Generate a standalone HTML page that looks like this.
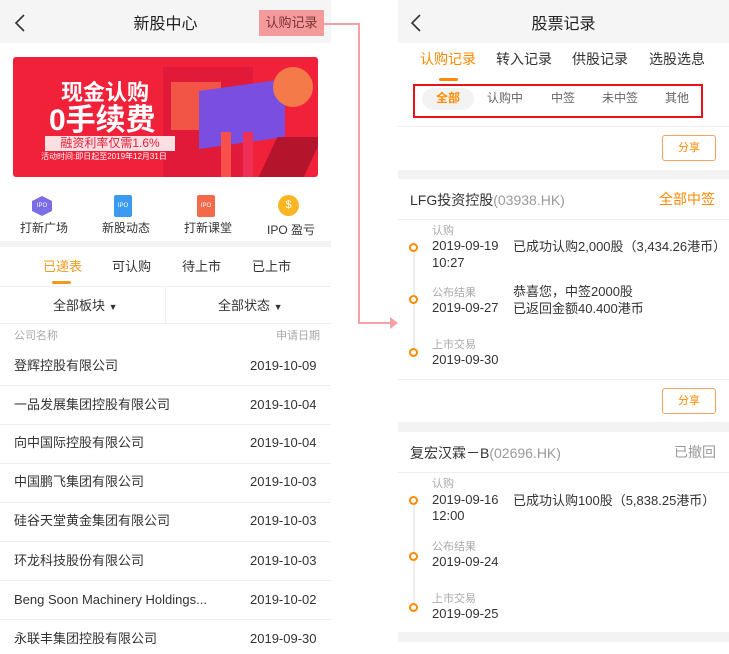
<!DOCTYPE html>
<html><head><meta charset="utf-8"><style>
*{margin:0;padding:0;box-sizing:border-box}
body{width:729px;height:654px;background:#fff;position:relative;overflow:hidden;font-family:"Liberation Sans","Noto Sans CJK SC",sans-serif;color:#333}
.a{position:absolute;white-space:nowrap}
.hdr{background:#f5f5f5}
.row{font-size:13px;color:#333}
.line{position:absolute;height:1px;background:#efefef}
.dot{position:absolute;width:9px;height:9px;border:2.5px solid #ff8a00;border-radius:50%;background:#fff}
.sm{font-size:11px;color:#aaa}
.t{font-size:13px;color:#333}
.share{position:absolute;width:54px;height:26px;border:1px solid #f7a35c;border-radius:3px;color:#ff8a00;font-size:11px;text-align:center;line-height:24px}
</style></head><body>
<!-- LEFT -->
<div class="a hdr" style="left:0;top:0;width:331px;height:43px"></div>
<svg class="a" style="left:14px;top:14px" width="12" height="18"><path d="M10 1 L2 9 L10 17" stroke="#333" stroke-width="1.6" fill="none"/></svg>
<div class="a" style="left:0;width:331px;top:10px;text-align:center;font-size:16px;color:#222">新股中心</div>
<div class="a" style="left:259px;top:10px;width:65px;height:26px;background:#f49a9c;color:#7a3333;font-size:13px;text-align:center;line-height:26px">认购记录</div>
<div class="a" style="left:13px;top:57px;width:305px;height:120px;background:#f2213a;border-radius:3px;overflow:hidden">
 <div class="a" style="left:150px;top:10px;width:90px;height:110px;background:#e21a3a"></div>
 <div class="a" style="left:158px;top:25px;width:50px;height:48px;background:#f6634a;opacity:.8"></div>
 <div class="a" style="left:186px;top:28px;width:86px;height:58px;background:#7a4ee0;transform:skewY(-8deg)"></div>
 <div class="a" style="left:260px;top:10px;width:40px;height:40px;border-radius:50%;background:#f47a4a"></div>
 <div class="a" style="left:208px;top:75px;width:10px;height:45px;background:#f8504a"></div>
 <div class="a" style="left:230px;top:75px;width:10px;height:45px;background:#ee3056"></div>
 <div class="a" style="left:255px;top:80px;width:45px;height:40px;background:#b5152c;transform:skewX(-25deg)"></div>
 <div class="a" style="left:48px;top:18px;font-size:22px;font-weight:bold;color:#fff">现金认购</div>
 <div class="a" style="left:36px;top:38px;font-size:30px;font-weight:bold;color:#fff">0手续费</div>
 <div class="a" style="left:32px;top:79px;width:130px;height:15px;background:#fcdfe2;color:#e0203a;font-size:12px;text-align:center;line-height:15px">融资利率仅需1.6%</div>
 <div class="a" style="left:28px;top:94px;font-size:8px;color:#fff">活动时间:即日起至2019年12月31日</div>
</div>
<div class="a" style="left:32px;top:196px;width:20px;height:20px;background:#7b6de8;clip-path:polygon(50% 0,100% 25%,100% 75%,50% 100%,0 75%,0 25%);color:#fff;font-size:6px;text-align:center;line-height:20px">IPO</div>
<div class="a" style="left:114px;top:195px;width:18px;height:22px;background:#3c9af0;border-radius:2px;color:#fff;font-size:6px;text-align:center;line-height:22px">IPO</div>
<div class="a" style="left:197px;top:195px;width:18px;height:22px;background:#f36a4a;border-radius:2px;color:#fff;font-size:6px;text-align:center;line-height:22px">IPO</div>
<div class="a" style="left:278px;top:195px;width:21px;height:21px;background:#f8b622;border-radius:50%;color:#fff;font-size:11px;text-align:center;line-height:21px">$</div>
<div class="a row" style="left:20px;top:219px;font-size:12px">打新广场</div>
<div class="a row" style="left:102px;top:219px;font-size:12px">新股动态</div>
<div class="a row" style="left:184px;top:219px;font-size:12px">打新课堂</div>
<div class="a row" style="left:267px;top:221px;font-size:12px">IPO 盈亏</div>
<div class="a" style="left:0;top:241px;width:331px;height:6px;background:#f3f3f3"></div>
<div class="a" style="left:43px;top:256px;font-size:13px;color:#f39a1e">已递表</div>
<div class="a" style="left:52px;top:281px;width:19px;height:3px;background:#f39a1e;border-radius:2px"></div>
<div class="a row" style="left:112px;top:256px">可认购</div>
<div class="a row" style="left:182px;top:256px">待上市</div>
<div class="a row" style="left:252px;top:256px">已上市</div>
<div class="line" style="left:0;top:286px;width:331px"></div>
<div class="a" style="left:165px;top:287px;width:1px;height:36px;background:#efefef"></div>
<div class="a row" style="left:53px;top:295px">全部板块 <span style="font-size:9px">▼</span></div>
<div class="a row" style="left:218px;top:295px">全部状态 <span style="font-size:9px">▼</span></div>
<div class="line" style="left:0;top:323px;width:331px"></div>
<div class="a sm" style="left:14px;top:327px">公司名称</div>
<div class="a sm" style="left:276px;top:327px">申请日期</div>
<div class="a row" style="left:14px;top:355px">登辉控股有限公司</div><div class="a row" style="left:250px;top:358px">2019-10-09</div>
<div class="line" style="left:0;top:385px;width:331px"></div>
<div class="a row" style="left:14px;top:394px">一品发展集团控股有限公司</div><div class="a row" style="left:250px;top:397px">2019-10-04</div>
<div class="line" style="left:0;top:424px;width:331px"></div>
<div class="a row" style="left:14px;top:432px">向中国际控股有限公司</div><div class="a row" style="left:250px;top:435px">2019-10-04</div>
<div class="line" style="left:0;top:463px;width:331px"></div>
<div class="a row" style="left:14px;top:471px">中国鹏飞集团有限公司</div><div class="a row" style="left:250px;top:474px">2019-10-03</div>
<div class="line" style="left:0;top:502px;width:331px"></div>
<div class="a row" style="left:14px;top:510px">硅谷天堂黄金集团有限公司</div><div class="a row" style="left:250px;top:513px">2019-10-03</div>
<div class="line" style="left:0;top:541px;width:331px"></div>
<div class="a row" style="left:14px;top:550px">环龙科技股份有限公司</div><div class="a row" style="left:250px;top:553px">2019-10-03</div>
<div class="line" style="left:0;top:580px;width:331px"></div>
<div class="a row" style="left:14px;top:592px">Beng Soon Machinery Holdings...</div><div class="a row" style="left:250px;top:592px">2019-10-02</div>
<div class="line" style="left:0;top:619px;width:331px"></div>
<div class="a row" style="left:14px;top:628px">永联丰集团控股有限公司</div><div class="a row" style="left:250px;top:631px">2019-09-30</div>
<!-- connector -->
<svg class="a" style="left:320px;top:15px" width="80" height="320"><path d="M4 9 H39 V308 H72" stroke="#f4a0a6" stroke-width="2" fill="none"/><path d="M70 302 L78 308 L70 314 Z" fill="#f4a0a6"/></svg>
<!-- RIGHT -->
<div class="a hdr" style="left:398px;top:0;width:331px;height:43px"></div>
<svg class="a" style="left:410px;top:14px" width="12" height="18"><path d="M10 1 L2 9 L10 17" stroke="#333" stroke-width="1.6" fill="none"/></svg>
<div class="a" style="left:398px;width:331px;top:10px;text-align:center;font-size:16px;color:#222">股票记录</div>
<div class="a" style="left:420px;top:49px;font-size:14px;color:#ff8a00">认购记录</div>
<div class="a" style="left:439px;top:78px;width:19px;height:3px;background:#ff8a00;border-radius:2px"></div>
<div class="a" style="left:496px;top:49px;font-size:14px">转入记录</div>
<div class="a" style="left:572px;top:49px;font-size:14px">供股记录</div>
<div class="a" style="left:649px;top:49px;font-size:14px">选股选息</div>
<div class="a" style="left:413px;top:84px;width:290px;height:34px;border:2px solid #e8121c"></div>
<div class="a" style="left:422px;top:88px;width:52px;height:22px;background:#f3f3f3;border-radius:11px;color:#ff8a00;font-size:12px;text-align:center;line-height:20px;font-weight:bold">全部</div>
<div class="a" style="left:487px;top:89px;font-size:12px;color:#666">认购中</div>
<div class="a" style="left:551px;top:89px;font-size:12px;color:#666">中签</div>
<div class="a" style="left:602px;top:89px;font-size:12px;color:#666">未中签</div>
<div class="a" style="left:665px;top:89px;font-size:12px;color:#666">其他</div>
<div class="line" style="left:398px;top:126px;width:331px"></div>
<div class="share" style="left:662px;top:135px">分享</div>
<div class="a" style="left:398px;top:170px;width:331px;height:9px;background:#f3f3f3"></div>
<div class="a" style="left:410px;top:190px;font-size:14px;color:#333">LFG投资控股<span style="color:#999">(03938.HK)</span></div>
<div class="a" style="left:659px;top:189px;font-size:14px;color:#ff8a00">全部中签</div>
<div class="line" style="left:398px;top:219px;width:331px"></div>
<div class="a" style="left:413px;top:248px;width:1.5px;height:105px;background:#eee"></div>
<div class="dot" style="left:409px;top:243px"></div>
<div class="dot" style="left:409px;top:295px"></div>
<div class="dot" style="left:409px;top:348px"></div>
<div class="a sm" style="left:432px;top:222px">认购</div>
<div class="a t" style="left:432px;top:238px">2019-09-19</div>
<div class="a t" style="left:432px;top:255px">10:27</div>
<div class="a t" style="left:513px;top:236px">已成功认购2,000股（3,434.26港币）</div>
<div class="a sm" style="left:432px;top:284px">公布结果</div>
<div class="a t" style="left:432px;top:300px">2019-09-27</div>
<div class="a t" style="left:513px;top:281px">恭喜您，中签2000股</div>
<div class="a t" style="left:513px;top:298px">已返回金额40.400港币</div>
<div class="a sm" style="left:432px;top:336px">上市交易</div>
<div class="a t" style="left:432px;top:352px">2019-09-30</div>
<div class="line" style="left:398px;top:379px;width:331px"></div>
<div class="share" style="left:662px;top:388px">分享</div>
<div class="a" style="left:398px;top:422px;width:331px;height:10px;background:#f3f3f3"></div>
<div class="a" style="left:410px;top:443px;font-size:14px;color:#333">复宏汉霖－B<span style="color:#999">(02696.HK)</span></div>
<div class="a" style="left:674px;top:442px;font-size:14px;color:#999">已撤回</div>
<div class="line" style="left:398px;top:472px;width:331px"></div>
<div class="a" style="left:413px;top:500px;width:1.5px;height:106px;background:#eee"></div>
<div class="dot" style="left:409px;top:496px"></div>
<div class="dot" style="left:409px;top:552px"></div>
<div class="dot" style="left:409px;top:603px"></div>
<div class="a sm" style="left:432px;top:475px">认购</div>
<div class="a t" style="left:432px;top:492px">2019-09-16</div>
<div class="a t" style="left:432px;top:508px">12:00</div>
<div class="a t" style="left:513px;top:490px">已成功认购100股（5,838.25港币）</div>
<div class="a sm" style="left:432px;top:538px">公布结果</div>
<div class="a t" style="left:432px;top:554px">2019-09-24</div>
<div class="a sm" style="left:432px;top:590px">上市交易</div>
<div class="a t" style="left:432px;top:606px">2019-09-25</div>
<div class="a" style="left:398px;top:632px;width:331px;height:10px;background:#f3f3f3"></div>
</body></html>
